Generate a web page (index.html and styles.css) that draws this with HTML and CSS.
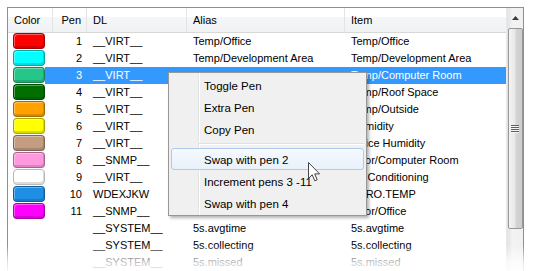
FILE: index.html
```html
<!DOCTYPE html>
<html lang="en">
<head>
    <meta charset="UTF-8">
    <title>Pens</title>
    <link rel="stylesheet" href="styles.css">
</head>
<body>
    <div class="frame">
        <div class="list">
            <div class="head">
                <div class="hcell">Color</div>
                <div class="hcell num">Pen</div>
                <div class="hcell">DL</div>
                <div class="hcell">Alias</div>
                <div class="hcell">Item</div>
            </div>
            <div class="row"><div class="cell"><span class="swatch red"></span></div><div class="cell num">1</div><div class="cell">__VIRT__</div><div class="cell">Temp/Office</div><div class="cell">Temp/Office</div></div>
            <div class="row"><div class="cell"><span class="swatch cyan"></span></div><div class="cell num">2</div><div class="cell">__VIRT__</div><div class="cell">Temp/Development Area</div><div class="cell">Temp/Development Area</div></div>
            <!-- alias column of rows 3-11 sits under the popup menu -->
            <div class="row selected"><div class="cell"><span class="swatch green"></span></div><div class="cell num">3</div><div class="cell">__VIRT__</div><div class="cell"></div><div class="cell">Temp/Computer Room</div></div>
            <div class="row"><div class="cell"><span class="swatch dkgreen"></span></div><div class="cell num">4</div><div class="cell">__VIRT__</div><div class="cell"></div><div class="cell">Temp/Roof Space</div></div>
            <div class="row"><div class="cell"><span class="swatch orange"></span></div><div class="cell num">5</div><div class="cell">__VIRT__</div><div class="cell"></div><div class="cell">Temp/Outside</div></div>
            <div class="row"><div class="cell"><span class="swatch yellow"></span></div><div class="cell num">6</div><div class="cell">__VIRT__</div><div class="cell"></div><div class="cell">Humidity</div></div>
            <div class="row"><div class="cell"><span class="swatch tan"></span></div><div class="cell num">7</div><div class="cell">__VIRT__</div><div class="cell"></div><div class="cell">Office Humidity</div></div>
            <div class="row"><div class="cell"><span class="swatch pink"></span></div><div class="cell num">8</div><div class="cell">__SNMP__</div><div class="cell"></div><div class="cell">Door/Computer Room</div></div>
            <div class="row"><div class="cell"><span class="swatch white"></span></div><div class="cell num">9</div><div class="cell">__VIRT__</div><div class="cell"></div><div class="cell">Air Conditioning</div></div>
            <div class="row"><div class="cell"><span class="swatch blue"></span></div><div class="cell num">10</div><div class="cell">WDEXJKW</div><div class="cell"></div><div class="cell">AERO.TEMP</div></div>
            <div class="row"><div class="cell"><span class="swatch magenta"></span></div><div class="cell num">11</div><div class="cell">__SNMP__</div><div class="cell"></div><div class="cell">Door/Office</div></div>
            <div class="row"><div class="cell"></div><div class="cell num"></div><div class="cell">__SYSTEM__</div><div class="cell">5s.avgtime</div><div class="cell">5s.avgtime</div></div>
            <div class="row"><div class="cell"></div><div class="cell num"></div><div class="cell">__SYSTEM__</div><div class="cell">5s.collecting</div><div class="cell">5s.collecting</div></div>
            <div class="row"><div class="cell"></div><div class="cell num"></div><div class="cell">__SYSTEM__</div><div class="cell">5s.missed</div><div class="cell">5s.missed</div></div>
        </div>
        <div class="scrollbar">
            <div class="sbtn">
                <svg width="7" height="4" viewBox="0 0 7 4"><path d="M0 4 L3.5 0 L7 4 Z" fill="#3c3c3c"/></svg>
            </div>
            <div class="thumb"><span class="grip"></span></div>
        </div>
    </div>

    <div class="menu">
        <div class="item">Toggle Pen</div>
        <div class="item">Extra Pen</div>
        <div class="item">Copy Pen</div>
        <div class="sep"></div>
        <div class="item hot">Swap with pen 2</div>
        <div class="item">Increment pens 3 -11</div>
        <div class="item">Swap with pen 4</div>
    </div>

    <svg class="cursor" width="14" height="22" viewBox="0 0 14 22">
        <path d="M1.5 1.5 L1.5 17.5 L5.2 13.8 L7.8 19.8 L10.2 18.8 L7.7 12.9 L12.6 12.9 Z" fill="#fff" stroke="#444" stroke-width="1" stroke-linejoin="round"/>
    </svg>

    <div class="fade"></div>
</body>
</html>
```

FILE: styles.css
```css
*{margin:0;padding:0;box-sizing:border-box;}
html,body{width:533px;height:271px;overflow:hidden;background:#fff;}
body{font-family:"Liberation Sans",Arial,sans-serif;font-size:11px;color:#000;position:relative;}

.frame{margin:7px 0 0 7px;width:517px;height:290px;border:1px solid #8c8f94;display:flex;background:#fff;}
.list{width:498px;}

.head{display:grid;grid-template-columns:45px 34px 100px 158px 161px;height:25px;border-bottom:1px solid #d8d8d8;
background:linear-gradient(#fff 0,#fff 9px,#f5f6f7 9px,#f1f2f4 100%);}
.hcell{line-height:24px;padding-left:6px;border-right:1px solid #e3e4e6;}
.hcell:last-child{border-right:none;}
.hcell.num,.cell.num{text-align:right;padding-left:0;padding-right:5px;}

.row{display:grid;grid-template-columns:45px 34px 100px 158px 161px;height:17px;line-height:17px;}
.cell{padding-left:6px;white-space:nowrap;overflow:hidden;}
.cell:first-child{padding-left:5px;}
.row.selected{background:linear-gradient(to right,transparent 37px,#3399ff 37px);color:#fff;}

.swatch{display:block;width:32px;height:16px;border-radius:4px;border:1px solid rgba(0,0,0,.35);
box-shadow:inset -1px -2px 0 rgba(0,0,0,.14),inset 1px 1px 0 rgba(255,255,255,.35);}
.red{background:#ff0000;}
.cyan{background:#00ffff;}
.green{background:#26c688;}
.dkgreen{background:#006f00;}
.orange{background:#ffa200;}
.yellow{background:#ffff00;}
.tan{background:#c49c80;}
.pink{background:#ff99dd;}
.white{background:#fff;border-color:#b8b8b8;}
.blue{background:#1f8fe6;}
.magenta{background:#ff00ff;}

.scrollbar{width:17px;display:flex;flex-direction:column;align-items:center;
background:linear-gradient(to right,#e2e2e2,#f3f3f3 35%,#f0f0f0);border-left:1px solid #e8e8e8;}
.sbtn{height:20px;width:100%;display:flex;align-items:center;justify-content:center;}
.thumb{width:15px;height:201px;border:1px solid #979797;border-radius:2px;display:flex;align-items:center;justify-content:center;
background:linear-gradient(to right,#f4f4f4,#e8e8e8 45%,#d4d4d4 55%,#cdcdcd);}
.grip{width:8px;height:8px;background:repeating-linear-gradient(#5f5f5f 0,#5f5f5f 1px,#f4f4f4 1px,#f4f4f4 2px);}

.menu{position:absolute;left:168px;top:72px;width:199px;padding:1px 2px;border:1px solid #979797;
background:#f0f0f0 linear-gradient(to right,transparent 29px,#e2e3e3 29px,#e2e3e3 30px,#fff 30px,#fff 31px,transparent 31px);
box-shadow:2px 2px 3px rgba(0,0,0,.3);}
.item{height:22px;line-height:22px;padding-left:32px;font-size:11.5px;border:1px solid transparent;border-radius:3px;}
.item.hot{border-color:#aecbef;background:linear-gradient(#f6f9fd,#e9f1fb);}
.sep{height:8px;margin-left:28px;background:linear-gradient(transparent 3px,#e0e0e0 3px,#e0e0e0 4px,#fff 4px,#fff 5px,transparent 5px);}

.cursor{position:absolute;left:307px;top:161px;}

.fade{position:absolute;left:0;top:235px;width:533px;height:36px;
background:linear-gradient(rgba(255,255,255,0) 0,rgba(255,255,255,0) 10px,rgba(255,255,255,.75) 27px,rgba(255,255,255,.9) 100%);}
```
